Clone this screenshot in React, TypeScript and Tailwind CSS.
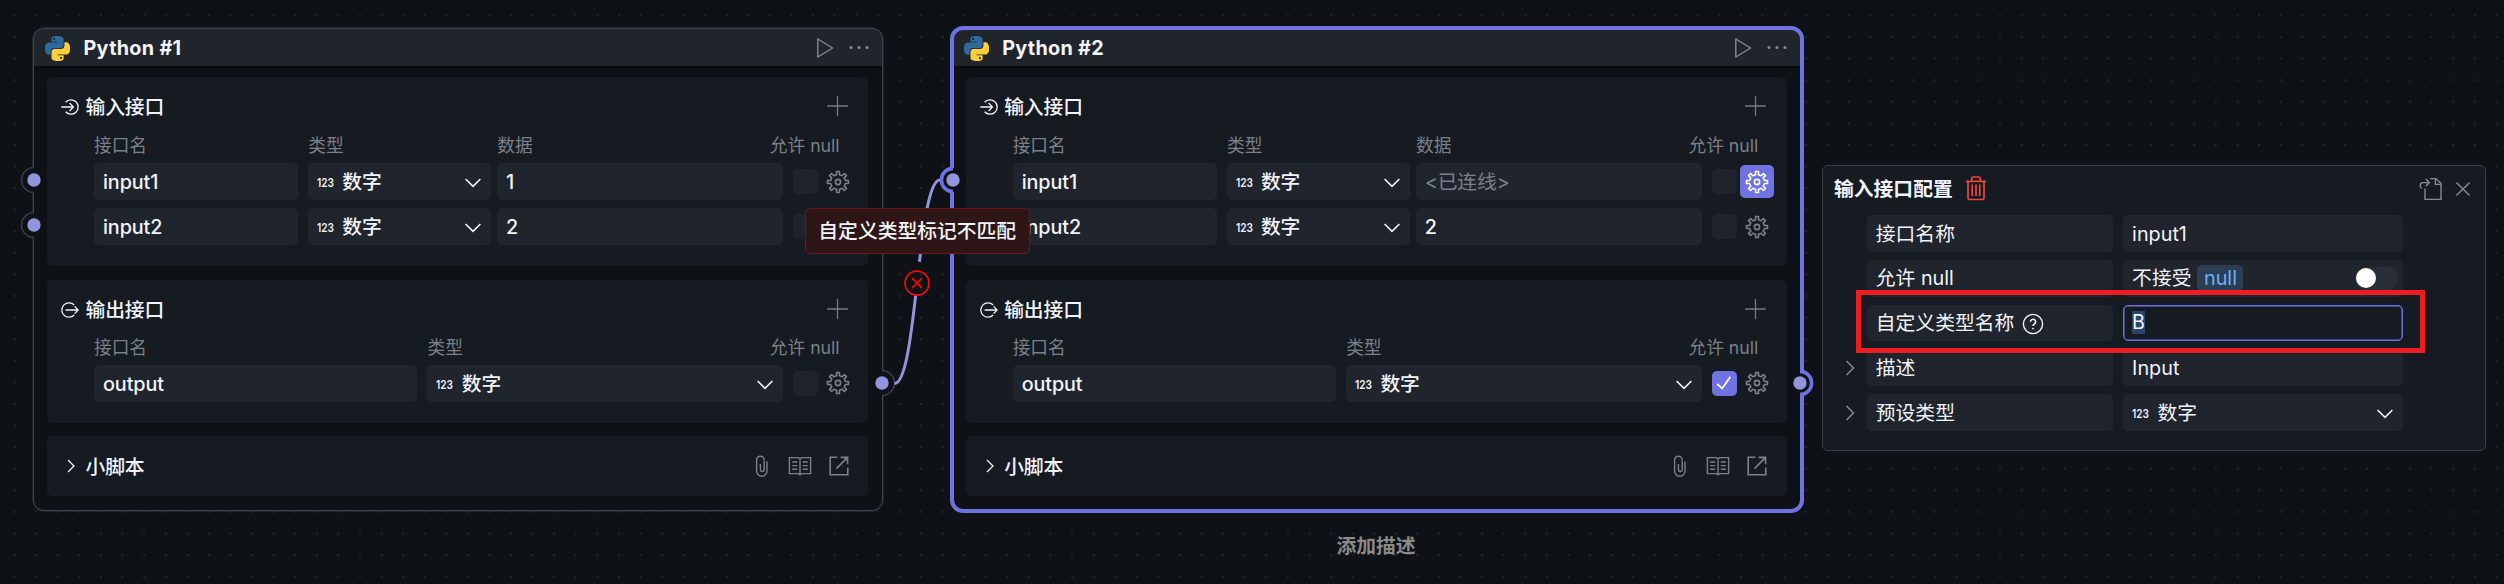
import React from "react";

const BG = "#0e1116";
const PURPLE = "#7072e2";
const LAVENDER = "#9294dc";

function gearPath(teeth: number, outer: number, inner: number) {
  const pts: string[] = [];
  const step = (Math.PI * 2) / teeth;
  for (let i = 0; i < teeth; i++) {
    const a = i * step - Math.PI / 2;
    const add = (r: number, t: number) =>
      pts.push(`${(12 + r * Math.cos(t)).toFixed(2)} ${(12 + r * Math.sin(t)).toFixed(2)}`);
    add(inner, a - step * 0.25);
    add(outer, a - step * 0.18);
    add(outer, a + step * 0.18);
    add(inner, a + step * 0.25);
  }
  return `M${pts.join("L")}Z`;
}
const GEAR = gearPath(8, 10.6, 7.5);

const Gear = ({ className = "" }: { className?: string }) => (
  <svg viewBox="0 0 24 24" className={`size-6 shrink-0 ${className}`} fill="none" stroke="currentColor" strokeWidth="1.6" strokeLinejoin="round">
    <path d={GEAR} />
    <circle cx="12" cy="12" r="2.6" />
  </svg>
);

const PythonLogo = () => (
  <svg viewBox="0 0 24 24" className="size-[25px] shrink-0">
    <path fill="#2f6a9e" d="M14.25.18l.9.2.73.26.59.3.45.32.34.34.25.34.16.33.1.3.04.26.02.2-.01.13V8.5l-.05.63-.13.55-.21.46-.26.38-.3.31-.33.25-.35.19-.35.14-.33.1-.3.07-.26.04-.21.02H8.77l-.69.05-.59.14-.5.22-.41.27-.33.32-.27.35-.2.36-.15.37-.1.35-.07.32-.04.27-.02.21v3.06H3.17l-.21-.03-.28-.07-.32-.12-.35-.18-.36-.26-.36-.36-.35-.46-.32-.59-.28-.73-.21-.88-.14-1.05-.05-1.23.06-1.22.16-1.04.24-.87.32-.71.36-.57.4-.44.42-.33.42-.24.4-.16.36-.1.32-.05.24-.01h.16l.06.01h8.16v-.83H6.18l-.01-2.75-.02-.37.05-.34.11-.31.17-.28.25-.26.31-.23.38-.2.44-.18.51-.15.58-.12.64-.1.71-.06.77-.04.84-.02 1.27.05zm-6.3 1.98l-.23.33-.08.41.08.41.23.34.33.22.41.09.41-.09.33-.22.23-.34.08-.41-.08-.41-.23-.33-.33-.22-.41-.09-.41.09z" />
    <path fill="#fdce3c" d="M21.1 6.11l.28.06.32.12.35.18.36.27.36.35.35.47.32.59.28.73.21.88.14 1.04.05 1.23-.06 1.23-.16 1.04-.24.86-.32.71-.36.57-.4.45-.42.33-.42.24-.4.16-.36.09-.32.05-.24.02-.16-.01h-8.22v.82h5.84l.01 2.76.02.36-.05.34-.11.31-.17.29-.25.25-.31.24-.38.2-.44.17-.51.15-.58.13-.64.09-.71.07-.77.04-.84.01-1.27-.04-1.07-.14-.9-.2-.73-.25-.59-.3-.45-.33-.34-.34-.25-.34-.16-.33-.1-.3-.04-.25-.02-.2.01-.13v-5.34l.05-.64.13-.54.21-.46.26-.38.3-.32.33-.24.35-.2.35-.14.33-.1.3-.06.26-.04.21-.02.13-.01h5.84l.69-.05.59-.14.5-.21.41-.28.33-.32.27-.35.2-.36.15-.36.1-.35.07-.32.04-.28.02-.21V6.07h2.09l.14.01zm-6.47 14.25l-.23.33-.08.41.08.41.23.33.33.23.41.08.41-.08.33-.23.23-.33.08-.41-.08-.41-.23-.33-.33-.23-.41-.08-.41.08z" />
  </svg>
);

const ChevronDown = () => (
  <svg viewBox="0 0 18 12" className="h-3 w-[18px] shrink-0" fill="none" stroke="currentColor" strokeWidth="1.6">
    <path d="M1.6 2L9 9.4L16.4 2" />
  </svg>
);

const ChevronRight = ({ className = "" }: { className?: string }) => (
  <svg viewBox="0 0 10 18" className={`h-[18px] w-[10px] shrink-0 ${className}`} fill="none" stroke="currentColor" strokeWidth="1.5">
    <path d="M1.5 2L8.5 9L1.5 16" />
  </svg>
);

const Plus = () => (
  <svg viewBox="0 0 22 22" className="-mt-[2px] size-[22px] shrink-0 text-[#747a82]" fill="none" stroke="currentColor" strokeWidth="1.3">
    <path d="M10.5 .8V21M.2 11H20.8" />
  </svg>
);

const InIcon = () => (
  <svg viewBox="0 0 18 18" className="size-[18px] shrink-0" fill="none" stroke="currentColor" strokeWidth="1.3">
    <path d="M.3 9H12M8.6 5L12.4 9L8.6 13" />
    <path d="M4.6 4.2A7.2 7.2 0 1 1 4.6 13.8" />
  </svg>
);

const OutIcon = () => (
  <svg viewBox="0 0 18 18" className="size-[18px] shrink-0" fill="none" stroke="currentColor" strokeWidth="1.3">
    <path d="M4.6 9H17M13.6 5.4L17.2 9L13.6 12.6" />
    <path d="M13.2 4A7.2 7.2 0 1 0 13.2 14" />
  </svg>
);

const Paperclip = () => (
  <svg viewBox="0 0 14 24" className="h-6 w-[14px]" fill="none" stroke="currentColor" strokeWidth="1.4">
    <path d="M9.2 6.2V15.6a1.9 1.9 0 0 1-3.8 0V10M1.6 17.4V6a3.8 3.8 0 0 1 7.6 0M1.6 17a5.2 5.2 0 0 0 10.4 0V7.6" />
  </svg>
);

const Book = () => (
  <svg viewBox="0 0 24 20" className="h-5 w-6" fill="none" stroke="currentColor" strokeWidth="1.4">
    <path d="M1.4 1.6H10.4L12 2.6L13.6 1.6H22.6V17.6H13.6L12 18.8L10.4 17.6H1.4ZM12 2.6V18.8" />
    <path d="M4.2 6H9.2M4.2 9.6H9.2M4.2 13.2H9.2M14.8 6H19.8M14.8 9.6H19.8M14.8 13.2H19.8" />
  </svg>
);

const External = () => (
  <svg viewBox="0 0 20 20" className="size-5" fill="none" stroke="currentColor" strokeWidth="1.6">
    <path d="M8.4 1.2H1.2V18.8H18.8V11.4M11.6 1.4H18.6V8.2M18.4 1.6L7.4 12.6" />
    <path d="M14.6 1.4H18.6V5.4Z" fill="currentColor" stroke="none" />
  </svg>
);

const Kind = () => (
  <svg className="mr-[6.3px] h-[18px] w-[19px] shrink-0 overflow-visible" viewBox="0 0 19 18">
    <text x="0" y="13.2" fill="currentColor" fontSize="12" fontWeight="600" letterSpacing="0" textLength="17" lengthAdjust="spacingAndGlyphs">123</text>
  </svg>
);

const Field = ({ className = "", children }: { className?: string; children?: React.ReactNode }) => (
  <div className={`flex h-full shrink-0 items-center rounded-[5px] bg-[#20242c] pt-[2px] pl-[9px] ${className}`}>{children}</div>
);

const TypeField = ({ className = "" }: { className?: string }) => (
  <Field className={`pr-[9px] ${className}`}>
    <Kind />
    <span className="flex-1">数字</span>
    <ChevronDown />
  </Field>
);

const Check = ({ on }: { on?: boolean }) =>
  on ? (
    <div className="flex size-[25px] shrink-0 items-center justify-center rounded-[5px] bg-[#7072e2]">
      <svg viewBox="0 0 16 16" className="size-4" fill="none" stroke="white" strokeWidth="1.8">
        <path d="M1.2 9L6.2 13.4L14.4 1.8" />
      </svg>
    </div>
  ) : (
    <div className="size-[25px] shrink-0 rounded-[5px] bg-[#1f232b]" />
  );

function Port({ side, active, y }: { side: "left" | "right"; active?: boolean; y: number }) {
  const w = active ? 3.6 : 1.5;
  const r = active ? 11.6 : 12.5;
  return (
    <svg
      viewBox="0 0 30 30"
      className={`absolute size-[30px] ${side === "left" ? "-left-[14px]" : "-right-[13.6px]"}`}
      style={{ top: y - 15 }}
      fill="none"
    >
      <circle cx="15" cy="15" r="12" fill={BG} />
      <path
        d={side === "left" ? `M15 ${15 - r}A${r} ${r} 0 0 0 15 ${15 + r}` : `M15 ${15 - r}A${r} ${r} 0 0 1 15 ${15 + r}`}
        stroke={active ? PURPLE : "#3a3f47"}
        strokeWidth={w}
      />
      <circle cx="15" cy="15" r="6.7" fill={LAVENDER} />
    </svg>
  );
}

const SectionTitle = ({ icon, children }: { icon: React.ReactNode; children: React.ReactNode }) => (
  <div className="flex h-10 items-center pr-[19.5px] pl-[14.2px]">
    {icon}
    <span className="ml-[6px] flex-1 pt-[2px]">{children}</span>
    <Plus />
  </div>
);

function InputRow({ name, data, linked, active }: { name: string; data: string; linked?: boolean; active?: boolean }) {
  return (
    <div className="flex h-[37px] items-center">
      <Field className="w-[204px]">{name}</Field>
      <TypeField className="ml-[10px] w-[183px]" />
      <Field className={`ml-[6px] w-[286.5px] ${linked ? "font-normal text-[#7b8088]" : ""}`}>{data}</Field>
      <div className="ml-[9.5px]"><Check /></div>
      {active ? (
        <div className="ml-[3.5px] flex size-[33.5px] items-center justify-center rounded-[5px] bg-[#7072e2] text-white">
          <Gear />
        </div>
      ) : (
        <Gear className="ml-[8.3px] text-[#7c8189]" />
      )}
    </div>
  );
}

function Node({ title, active, className, data, allowNull }: { title: string; active?: boolean; className: string; data: string; allowNull?: boolean }) {
  return (
    <div className={`absolute top-[28px] h-[483px] w-[850px] font-medium tracking-[-0.1px] ${className}`}>
      <div
        className={`flex h-full flex-col overflow-hidden rounded-[11px] bg-[#0e1116] ${
          active ? "outline-4 -outline-offset-2 outline-[#7072e2]" : "outline-1 -outline-offset-1 outline-[#3f454d] shadow-[0_0_0_0.5px_#30353c]"
        }`}
      >
        <div className="flex h-[38px] shrink-0 items-center bg-[#20242b] pt-[2px] pr-[13.5px] pl-[12px] shadow-[0_1px_3px_#07090c]">
          <PythonLogo />
          <span className="ml-[13.5px] flex-1 pt-px font-bold tracking-[0.3px]">{title}</span>
          <svg viewBox="0 0 18 22" className="h-[22px] w-[18px] text-[#868b93]" fill="none" stroke="currentColor" strokeWidth="1.4" strokeLinejoin="round">
            <path d="M1.8 2L16.6 11L1.8 20Z" />
          </svg>
          <svg viewBox="0 0 22 6" className="ml-[14px] h-[6px] w-[22px]" fill="#868b93">
            <circle cx="3" cy="2.4" r="1.5" />
            <circle cx="11" cy="2.4" r="1.5" />
            <circle cx="19" cy="2.4" r="1.5" />
          </svg>
        </div>

        <div className="flex flex-col pt-[11px] pr-[15px] pl-[14.3px]">
          <section className="h-[189px] rounded-[5px] bg-[#161a21] pt-[10px]">
            <SectionTitle icon={<InIcon />}>输入接口</SectionTitle>
            <div className="flex h-9 items-center pt-[2px] pl-[46.7px] text-[17.7px] font-normal tracking-normal text-[#7b8088]">
              <span className="w-[214.3px]">接口名</span>
              <span className="w-[189px]">类型</span>
              <span className="w-[272.5px]">数据</span>
              <span>允许 null</span>
            </div>
            <div className="flex flex-col gap-2 pl-[46.7px]">
              <InputRow name="input1" data={data} linked={active} active={active} />
              <InputRow name="input2" data="2" />
            </div>
          </section>

          <section className="mt-[13.5px] h-[143.5px] rounded-[5px] bg-[#161a21] pt-[10px]">
            <SectionTitle icon={<OutIcon />}>输出接口</SectionTitle>
            <div className="flex h-[35.5px] items-center pt-[2px] pl-[46.7px] text-[17.7px] font-normal tracking-normal text-[#7b8088]">
              <span className="w-[333.5px]">接口名</span>
              <span className="w-[342.3px]">类型</span>
              <span>允许 null</span>
            </div>
            <div className="flex h-[36.5px] items-center pl-[46.7px]">
              <Field className="w-[323.5px] pt-[3px]">output</Field>
              <TypeField className="ml-[10px] w-[356px] pt-[3px]" />
              <div className="ml-[9.5px]"><Check on={allowNull} /></div>
              <Gear className="ml-[8.3px] text-[#7c8189]" />
            </div>
          </section>

          <section className="mt-[13.3px] flex h-[59.7px] items-center rounded-[5px] bg-[#161a21] pr-[19.3px] pl-[19px]">
            <ChevronRight className="scale-85" />
            <span className="ml-[9.2px] flex-1 pt-[3px]">小脚本</span>
            <div className="flex items-center text-[#7c8189]">
              <Paperclip />
              <span className="ml-[19px]"><Book /></span>
              <span className="ml-[17px]"><External /></span>
            </div>
          </section>
        </div>
      </div>
      <Port side="left" active={active} y={152} />
      <Port side="left" active={active} y={196.7} />
      <Port side="right" active={active} y={355.4} />
    </div>
  );
}

function ConfigRow({ label, help, expandable, children }: { label: string; help?: boolean; expandable?: boolean; children: React.ReactNode }) {
  return (
    <div className="flex h-[36.8px] items-center">
      <div className="flex w-[43.8px] justify-end pr-[11.5px] text-[#868b93]">{expandable && <ChevronRight />}</div>
      <Field className="w-[246px]">
        {label}
        {help && (
          <svg viewBox="0 0 22 22" className="ml-[8px] size-[22px]" fill="none" stroke="currentColor" strokeWidth="1.4">
            <circle cx="11" cy="11" r="9.6" />
            <path d="M8.4 8.8a2.6 2.6 0 1 1 4.2 2.1c-1 .7-1.6 1.1-1.6 2.2" strokeWidth="1.6" />
            <circle cx="11" cy="15.6" r=".6" fill="currentColor" strokeWidth=".8" />
          </svg>
        )}
      </Field>
      <div className="ml-[10.3px] h-full">{children}</div>
    </div>
  );
}

export default function App() {
  return (
    <div className="relative h-[584px] w-[2504px] overflow-hidden bg-[#0e1116] font-['Inter','Noto_Sans_CJK_SC',sans-serif] text-[19.8px] leading-none whitespace-nowrap text-[#f0f3fa]">
      <svg className="absolute inset-0 h-full w-full">
        <defs>
          <pattern id="dots" width="21.58" height="21.58" patternUnits="userSpaceOnUse" x="3.9" y="4.7">
            <circle cx="10.79" cy="10.79" r=".95" fill="#2b3036" />
          </pattern>
        </defs>
        <rect width="2504" height="584" fill="url(#dots)" />
      </svg>

      <Node title="Python #1" className="left-[33px]" data="1" />
      <Node title="Python #2" className="left-[951.67px]" data="<已连线>" active allowNull />

      <svg className="absolute inset-0 h-full w-full" fill="none">
        <g stroke={LAVENDER} strokeWidth="3">
          <path d="M894.5 383.4C917.2 383.4 917.2 180 940 180" strokeDasharray="92.5 34 200" />
        </g>
        <g stroke="#f50a0a" strokeWidth="1.7">
          <circle cx="917" cy="283.2" r="12" />
          <path d="M912 278.2L922 288.2M922 278.2L912 288.2" />
        </g>
      </svg>

      <div className="absolute top-[208px] left-[804.5px] flex h-[46px] w-[225.5px] items-center justify-center rounded-[5px] border border-[#701619] bg-[#2e1617] pt-[2px] font-medium">
        自定义类型标记不匹配
      </div>

      <div className="absolute top-[537px] left-[951px] w-[850px] text-center font-bold text-[#8a8a8a]">添加描述</div>

      <div className="absolute top-[165px] left-[1822px] h-[286px] w-[664px] rounded-[6px] border border-[#3b4048] bg-[#161a21]">
        <div className="flex h-[49px] items-center pr-[14px] pl-[11px]">
          <span className="-mt-px font-bold">输入接口配置</span>
          <svg viewBox="0 0 22 26" className="-mt-[6px] ml-[12px] h-[26px] w-[22px]" fill="none" stroke="#ee4540" strokeWidth="1.7">
            <path d="M1 6.4H21M3 6.4V23a1.5 1.5 0 0 0 1.5 1.5H17.5A1.5 1.5 0 0 0 19 23V6.4M6.8 6V3.2A1.2 1.2 0 0 1 8 2H14A1.2 1.2 0 0 1 15.2 3.2V6" />
            <path d="M7.2 9.4V21M11 9.4V21M14.8 9.4V21" />
          </svg>
          <span className="flex-1" />
          <svg viewBox="0 0 26 24" className="-mt-[3px] h-6 w-[26px] text-[#868b93]" fill="none" stroke="currentColor" strokeWidth="1.4">
            <path d="M13 1.6H19L24 6.6V22.4H8V11.6M18.4 1.8V7.4H24" />
            <path d="M4.6 11.4A3.4 3.4 0 0 1 5 5.6H12.4M8.8 2L12.4 5.6L8.8 9.2" />
          </svg>
          <svg viewBox="0 0 16 16" className="-mt-[3px] ml-[12px] size-4 text-[#868b93]" fill="none" stroke="currentColor" strokeWidth="1.4">
            <path d="M1.4 1.4L14.6 14.6M14.6 1.4L1.4 14.6" />
          </svg>
        </div>
        <div className="flex flex-col gap-[8px]">
          <ConfigRow label="接口名称"><Field className="w-[280.3px]">input1</Field></ConfigRow>
          <ConfigRow label="允许 null">
            <Field className="w-[280.3px] pr-[5.5px]">
              不接受
              <span className="-mt-[2px] ml-[6px] flex h-[26px] items-center rounded-[5px] bg-[#2c3e52] px-[6.5px] pt-[2px] text-[#6ab0fb]">null</span>
              <span className="flex-1" />
              <span className="-mt-[2px] flex h-[23px] w-[43px] items-center rounded-full bg-[#2a2e38] px-[1.5px]">
                <span className="size-5 rounded-full bg-white" />
              </span>
            </Field>
          </ConfigRow>
          <ConfigRow label="自定义类型名称" help>
            <div className="flex h-full w-[280.3px] items-center rounded-[5px] border border-[#7072e2] bg-[#161a21] pl-[8px] shadow-[inset_0_0_0_0.5px_#7072e2]">
              <span className="flex h-[23px] items-center bg-[#27466d]">B</span>
            </div>
          </ConfigRow>
          <ConfigRow label="描述" expandable><Field className="w-[280.3px]">Input</Field></ConfigRow>
          <ConfigRow label="预设类型" expandable><TypeField className="w-[280.3px]" /></ConfigRow>
        </div>
      </div>

      <div className="absolute top-[290px] left-[1856px] h-[63px] w-[569px] border-[5px] border-[#ee1c23]" />
    </div>
  );
}
